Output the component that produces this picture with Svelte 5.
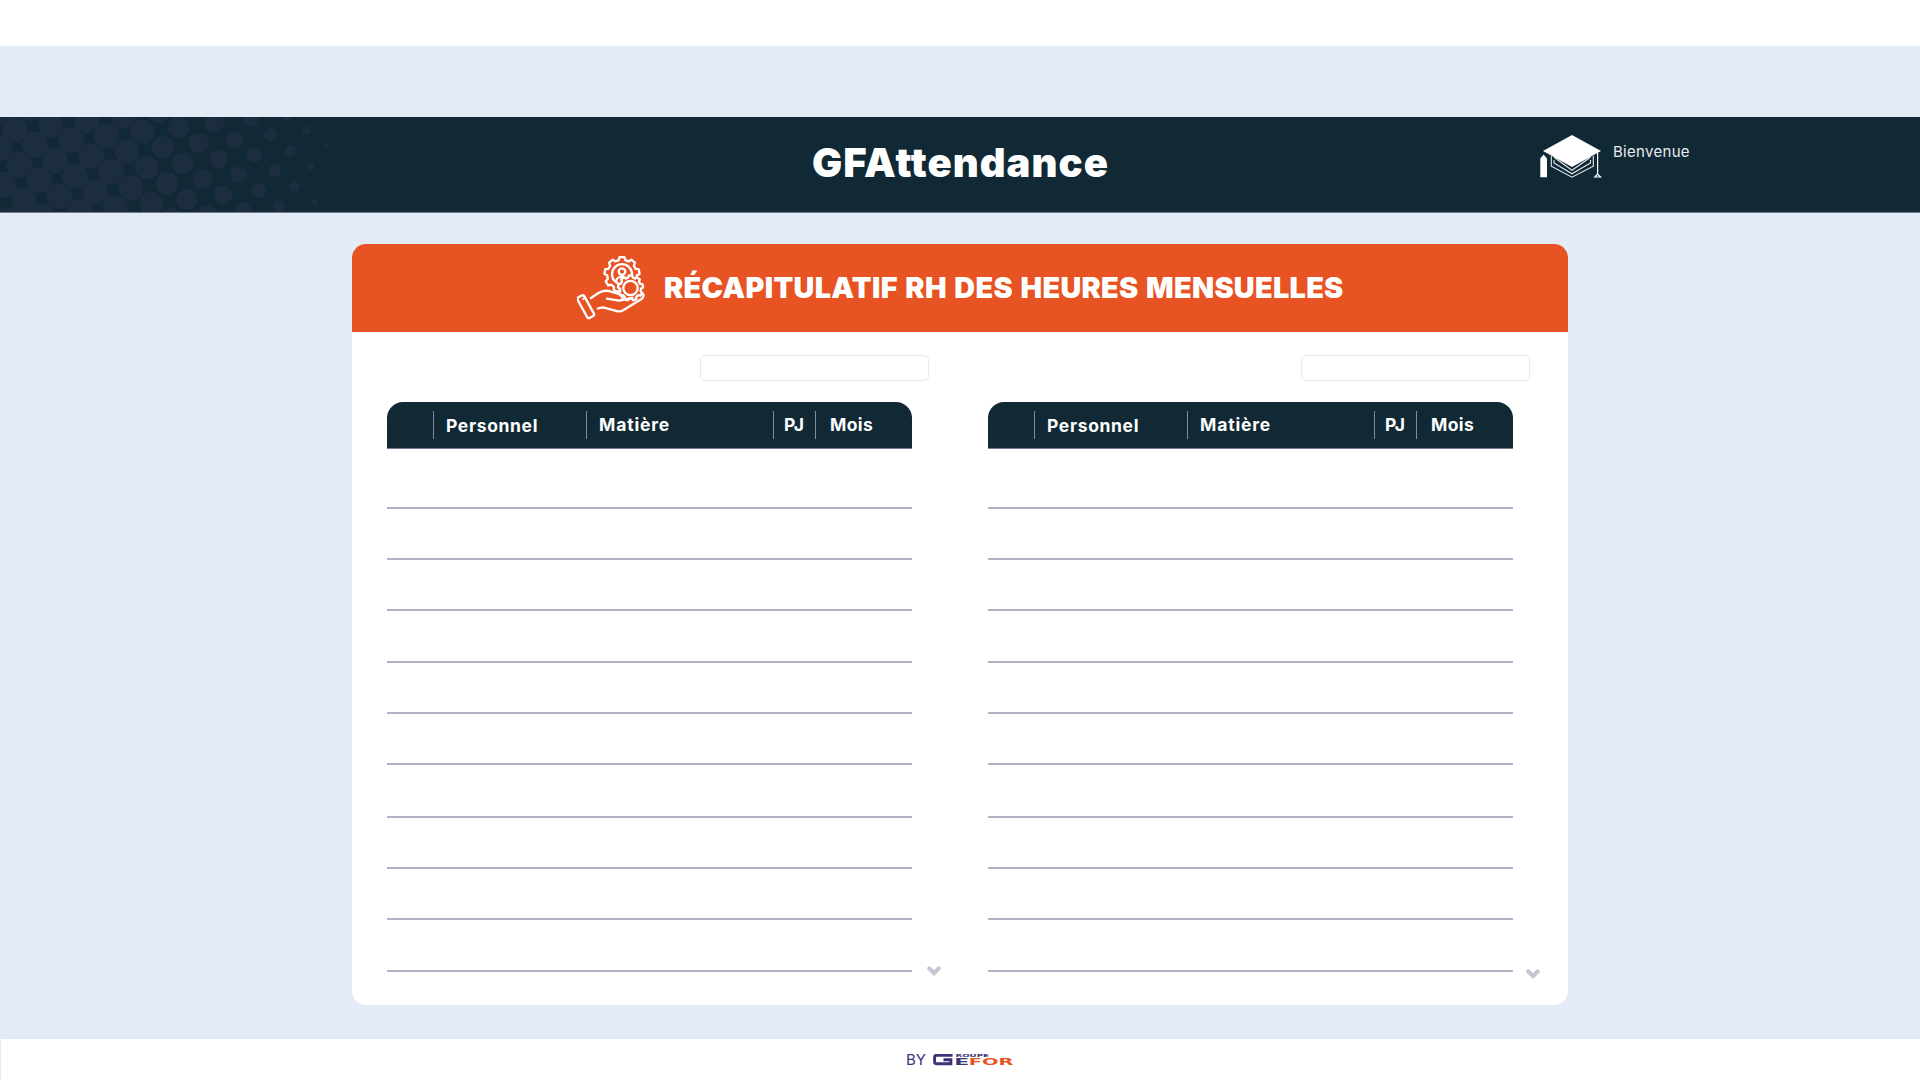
<script>
  // Halftone pattern: a rotated square lattice of dots that shrink to the right.
  const stops = [[0, 13], [112, 13], [143, 12], [183, 10.8], [218, 9.5], [254, 7.9], [270, 6.7], [290, 5.6], [306, 4.3], [315, 3.3], [326, 2.2], [330, 0.7], [334, 0]];
  function radius(x) {
    for (let k = 1; k < stops.length; k++) {
      const [x0, r0] = stops[k - 1];
      const [x1, r1] = stops[k];
      if (x <= x1) return r0 + ((r1 - r0) * (x - x0)) / (x1 - x0);
    }
    return 0;
  }
  const dots = [];
  for (let i = -6; i < 16; i++) {
    for (let j = -12; j < 8; j++) {
      const x = 15 + i * 20.06 - j * 15.8;
      const y = 11.7 + i * 15.8 + j * 20.06;
      if (x > -14 && x < 332 && y > -14 && y < 109) dots.push({ x, y, r: radius(Math.max(0, x)) });
    }
  }
  const rows = [509, 560, 611, 663, 714, 765, 818, 869, 920, 972];
  const heights = rows.map((y, i) => y - (i ? rows[i - 1] : 449));
  const tables = ['left', 'right'];

  function gear(cx, cy, teeth, ri, ro) {
    const pts = [];
    const step = (Math.PI * 2) / teeth;
    for (let t = 0; t < teeth; t++) {
      const a = t * step - Math.PI / 2;
      for (const [f, r] of [[-0.32, ri], [-0.2, ro], [0.2, ro], [0.32, ri]]) {
        pts.push(`${(cx + r * Math.cos(a + f * step)).toFixed(2)},${(cy + r * Math.sin(a + f * step)).toFixed(2)}`);
      }
    }
    return pts.join(' ');
  }
</script>

<div class="page">
  <div class="strip"></div>
  <header>
    <svg class="dots" width="360" height="95" viewBox="0 0 360 95">
      {#each dots as d}<circle cx={d.x} cy={d.y} r={d.r} />{/each}
    </svg>
    <h1>GFAttendance</h1>
    <div class="user">
      <svg width="64" height="46" viewBox="0 0 64 46">
        <path d="M3 17 32 1 61 17 32 33Z" fill="#fff" />
        <path d="M0.3 24.5 3.6 20.5 7 24.5V43.3H0.3Z" fill="#fff" />
        <path d="M11.3 22V32.2L32 43.2 53.3 32.2V22M14 26V29L32 39.8 50.5 29V26M14 23.2 32 36.3 50.5 23.2" fill="none" stroke="#e8ebf0" stroke-width="1.1" />
        <path d="M57.6 19V40M57.6 40 54.8 43H60.6Z" fill="none" stroke="#fff" stroke-width="1.2" />
      </svg>
      <span>Bienvenue</span>
    </div>
  </header>

  <main>
    <div class="banner">
      <svg class="hand" width="70" height="66" viewBox="0 0 70 66" fill="none" stroke="#fff" stroke-width="2.3" stroke-linecap="round" stroke-linejoin="round">
        <polygon points={gear(45, 19.6, 9, 14.8, 17.6)} />
        <circle cx="45" cy="19.2" r="10" />
        <circle cx="45" cy="16.6" r="3.3" />
        <path d="M39.3 26C39.3 20.5 50.7 20.5 50.7 26" />
        <polygon points={gear(53.5, 33, 9, 10.6, 12.6)} fill="#e75323" />
        <circle cx="53.5" cy="33" r="7.2" />
        <rect x="4.6" y="40" width="7.6" height="23.5" rx="2" transform="rotate(-29 8.5 51)" />
        <path d="M6.4 44v.1M14 43 21 38.3C26 35 31 35.4 35 37L43 39.3C47 40.5 46.5 45.4 42 45.6L30 43.7M46 45 55.5 42.6M20.8 53.5 26 52.3 40 56.2C43 57 45 56 47 54.7L64.5 44C67 42.3 67.3 38.6 64.6 38" />
      </svg>
      <h2>RÉCAPITULATIF RH DES HEURES MENSUELLES</h2>
    </div>
    <div class="tables">
      {#each tables as side}
        <section class={side}>
          <input aria-label="Recherche" />
          <div class="head">
            <span></span><span class="low">Personnel</span><span>Matière</span><span>PJ</span><span>Mois</span>
          </div>
          {#each heights as h}<div class="row" style:height="{h}px"></div>{/each}
          <svg class="chevron" width="14" height="10" viewBox="0 0 14 10"><path d="M2.3 2.5 7 7 11.7 2.5" fill="none" stroke="#c5c6d3" stroke-width="4.2" stroke-linecap="round" /></svg>
        </section>
      {/each}
    </div>
  </main>

  <footer>
    <span>BY</span>
    <svg width="82" height="14" viewBox="0 0 82 14">
      <path d="M19.6 1.4H3.2Q1.6 1.4 1.6 3V8.1Q1.6 9.7 3.2 9.7H17.9V5.8H10.5" fill="none" stroke="#3b3278" stroke-width="2.9" />
      <g font-family="DejaVu Sans" font-weight="700">
        <text x="22.5" y="3" font-size="4.2" fill="#3b3278" textLength="33.5" lengthAdjust="spacingAndGlyphs">ROUPE</text>
        <text x="21.3" y="11.2" font-size="8.8" fill="#3b3278" textLength="15" lengthAdjust="spacingAndGlyphs">E</text>
        <text x="35.8" y="11.2" font-size="8.8" fill="#e75323" textLength="44.8" lengthAdjust="spacingAndGlyphs">FOR</text>
      </g>
    </svg>
  </footer>
</div>

<style>
  :global(body) { margin: 0; background: #e3ebf7; }
  .page { width: 1920px; height: 1080px; display: flex; flex-direction: column; overflow: hidden; background: #e3ebf7; font-family: Inter, 'Noto Sans', sans-serif; box-sizing: border-box; }
  .strip { height: 46px; background: #fff; margin-bottom: 71px; flex: none; }
  header { position: relative; height: 95px; flex: none; background: #112935; border-bottom: 1px solid #747b91; display: flex; justify-content: center; }
  .dots { position: absolute; left: 0; top: 0; fill: #1b2d3e; }
  h1 { margin: 18px 0 0; color: #fff; font: 900 40px/56px Inter, sans-serif; letter-spacing: 1.05px; width: 296px; white-space: nowrap; }
  .user { position: absolute; left: 1540px; top: 17px; display: flex; color: #e8ebf0; }
  .user span { font: 400 15px/35px Inter, sans-serif; margin-left: 9px; letter-spacing: 0.3px; }
  main { width: 1215.5px; height: 761px; margin: 31px 0 0 352.3px; background: #fff; border-radius: 14px; overflow: hidden; flex: none; }
  .banner { height: 88px; background: #e75323; display: flex; }
  .hand { margin: 11px 0 0 225px; flex: none; }
  h2 { margin: 16px 0 0 16.7px; color: #fff; font: 900 28.8px/56px Inter, sans-serif; letter-spacing: 0.32px; word-spacing: 1.5px; white-space: nowrap; }
  .tables { display: flex; padding-left: 34.7px; gap: 76px; }
  section { width: 525px; position: relative; }
  input { display: block; box-sizing: border-box; width: 229px; height: 26px; margin: 23px 0 21px 313.5px; border: 1px solid #e9eaee; border-radius: 5px; background: #fff; padding: 0 8px; outline: 0; }
  .head { height: 46px; background: #112935; border-bottom: 1px solid #747b91; border-radius: 16px 16px 0 0; display: grid; grid-template-columns: 46px 153px 187px 42px 1fr; }
  .head span { height: 28px; margin-top: 9px; color: #fff; font: 700 17.5px/28px Inter, sans-serif; letter-spacing: 0.65px; padding-left: 12px; border-left: 1px solid #868a99; white-space: nowrap; }
  .head span:first-child { border: 0; }
  .head span:nth-child(3) { letter-spacing: 0.85px; }
  .head span:nth-child(4) { padding-left: 10px; letter-spacing: 0; }
  .head span:nth-child(5) { padding-left: 14px; letter-spacing: 0.4px; }
  .head .low { line-height: 30px; }
  .row { box-sizing: border-box; border-bottom: 2px solid #b0b2c5; }
  .chevron { position: absolute; left: 540px; bottom: -4px; }
  .right .chevron { left: 538px; bottom: -7px; }
  footer { height: 41px; margin: auto 0 0 1px; background: #fff; display: flex; padding-left: 905px; color: #3b3278; font: 400 15px/41px Inter, sans-serif; box-sizing: border-box; flex: none; }
  footer span { width: 19px; white-space: nowrap; }
  footer svg { margin: 15px 0 0 8px; }
</style>
